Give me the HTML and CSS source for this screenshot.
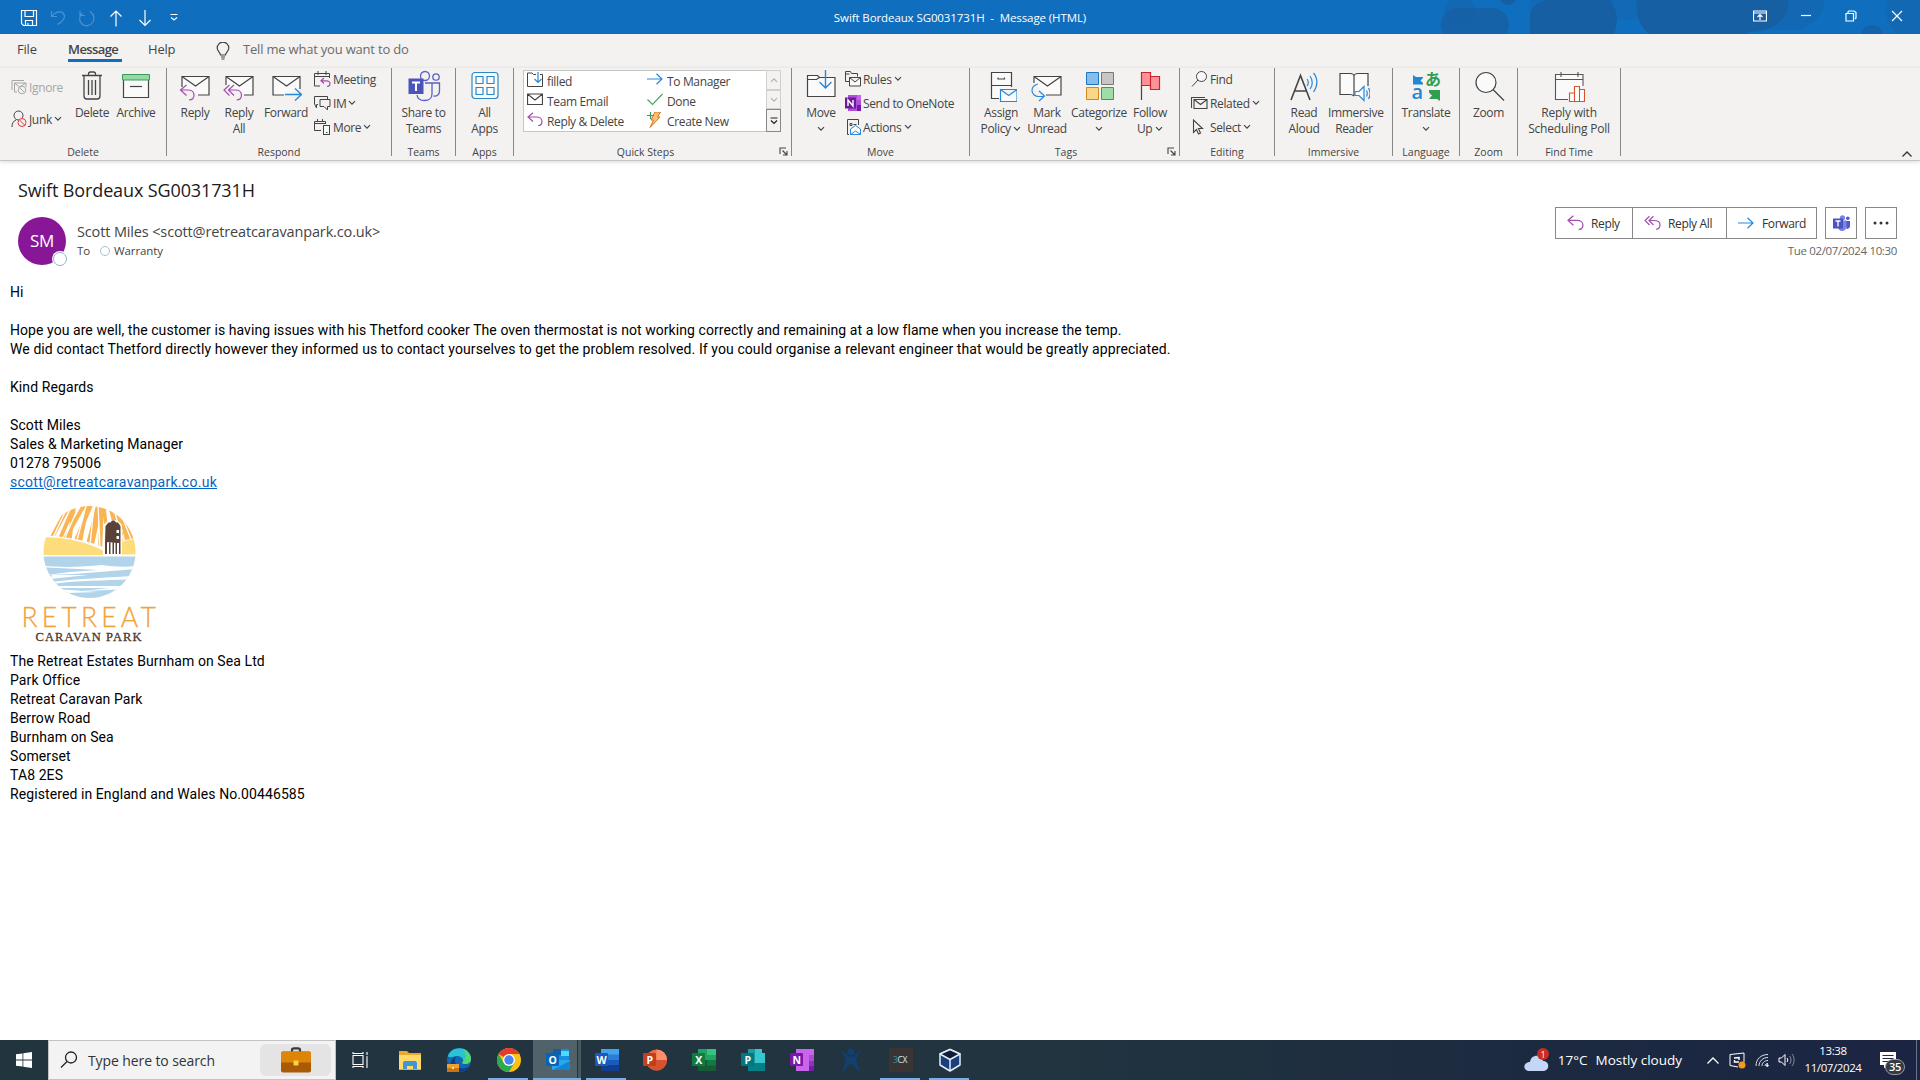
FILE: index.html
```html
<!DOCTYPE html>
<html lang="en">
<head>
  <meta charset="UTF-8">
  <title>Swift Bordeaux SG0031731H - Message (HTML)</title>
  <link rel="stylesheet" href="styles.css">
</head>
<body>
  <svg class="defs">
    <symbol id="chev" viewBox="0 0 8 6"><path d="M1 1.2l3 3 3-3" fill="none" stroke="currentColor" stroke-width="1.2"/></symbol>
    <symbol id="launch" viewBox="0 0 9 9"><path d="M1 7V1h6M3.5 3.5l4 4M8 4v4H4" fill="none" stroke="#444" stroke-width="1.1"/></symbol>
    <symbol id="arrow-back" viewBox="0 0 16 14"><path d="M6 .7L1 5l5 4.500M1 5h8.500c3 0 5.500 1.800 5.500 4.500S13 14 11 13.500" fill="none" stroke="#a34fae" stroke-width="1.200"/></symbol>
    <symbol id="arrow-back2" viewBox="0 0 17 14"><path d="M5.500 .7L1 5l4.500 4.500M9.500 .7L5 5l4.500 4.500M5 5h5c3.500 0 6 1.800 6 4.500S14 14 12 13.500" fill="none" stroke="#a34fae" stroke-width="1.200"/></symbol>
    <symbol id="arrow-fwd" viewBox="0 0 16 12"><path d="M0 6h15M9.500 .8L15 6l-5.500 5.200" fill="none" stroke="#2b88d8" stroke-width="1.200"/></symbol>
  </svg>

  <div class="window">
    <header class="titlebar">
      <svg class="clouds" width="500" height="34" viewBox="0 0 500 34">
        <g fill="#165fa3">
          <rect x="21" y="8" width="68" height="34" rx="17" opacity=".8"/>
          <circle cx="40" cy="10" r="15" opacity=".4"/>
          <path d="M110 34V14C112 2 130-4 150-4h36c10 8 14 22 8 38z"/>
          <path d="M217-2h152c0 20-14 34-40 34l-4 4h-94c-12-10-16-22-14-38z"/>
          <path d="M110 0h110v20H110z" opacity=".25"/>
          <circle cx="452" cy="36" r="11" opacity=".8"/>
          <circle cx="88" cy="-4" r="9"/>
          <path d="M468 0h32v34h-24c-10-12-12-22-8-34z" opacity=".4"/>
          <path d="M364 0h40c0 14-8 22-24 30h-36z" opacity=".4"/>
        </g>
      </svg>
      <div class="quick-access">
        <svg width="18" height="18" viewBox="0 0 18 18"><path d="M1.500 1.500h15v15h-13l-2-2zM5 1.500v6h8.500v-6M5.500 16.500v-5h7v5M8 14v2.500" class="line"/></svg>
        <svg width="18" height="18" viewBox="0 0 18 18" class="dim"><path d="M2.500 2v5.500H8M2.500 7.500C6 3 11 1.500 14 4c3 3 1.500 7-5.500 11.500" class="line"/></svg>
        <svg width="18" height="18" viewBox="0 0 18 18" class="dim"><path d="M2 2v4.500h5M4.500 4C1 7 .5 12 4 15s8 2 10.500-1.500 2-8-2.500-11" class="line"/></svg>
        <svg width="18" height="18" viewBox="0 0 18 18"><path d="M9 17.500V2M3.500 7.500L9 2l5.500 5.500" class="line"/></svg>
        <svg width="18" height="18" viewBox="0 0 18 18"><path d="M9 1v15.500M3.500 11L9 16.500l5.500-5.500" class="line"/></svg>
        <svg width="18" height="18" viewBox="0 0 18 18"><path d="M5.500 5.500h7M6 8.500l3 2.500 3-2.500" class="line"/></svg>
      </div>
      <div class="title">Swift Bordeaux SG0031731H &nbsp;-&nbsp; Message (HTML)</div>
      <div class="window-buttons">
        <svg width="14" height="12" viewBox="0 0 14 12"><path d="M.5 1h13v10H.5zM.5 3h13M7 10V4.500M4.500 7L7 4.500 9.500 7" class="line"/></svg>
        <svg width="10" height="12" viewBox="0 0 10 12"><path d="M0 5.500h10" class="line"/></svg>
        <svg width="12" height="12" viewBox="0 0 12 12"><path d="M1 3.500h7.500V11H1zM3 3.500V1.800L4 1h5l2 1.500V8l-1 1" class="line"/></svg>
        <svg width="12" height="12" viewBox="0 0 12 12"><path d="M1 1l10 10M11 1L1 11" class="line"/></svg>
      </div>
    </header>

    <nav class="tabs">
      <span class="tab tab-file">File</span>
      <span class="tab active">Message</span>
      <span class="tab tab-help">Help</span>
      <svg width="14" height="18" viewBox="0 0 14 18"><path d="M4.500 13c0-2.500-3.300-3.500-3.300-7a5.500 5.500 0 0111.600 0c0 3.500-3.300 4.500-3.300 7zM5 15h4M5.500 17h3" fill="none" stroke="#444" stroke-width="1.200"/></svg>
      <span class="tell-me">Tell me what you want to do</span>
    </nav>

    <div class="ribbon">
      <section class="group g-delete">
        <div class="group-body">
          <div class="small-col two">
            <div class="small disabled">
              <svg width="16" height="16" viewBox="0 0 16 16" fill="none" stroke="#a6a6a6"><path d="M1 11V1.500h12M6 13H3.500V4H15v4M3.500 4l5 4 6.500-4"/><circle cx="11" cy="11" r="3.800"/><path d="M8.500 8.500l5 5"/></svg>
              Ignore</div>
            <div class="small">
              <svg width="16" height="18" viewBox="0 0 16 18" fill="none" stroke="#444"><circle cx="7.500" cy="5.500" r="4.500"/><path d="M1 17c0-4 1.500-6 4-7"/><circle cx="11" cy="12.500" r="4" stroke="#e03a3e" fill="#f3f2f1"/><path d="M8.300 9.800l5.500 5.500" stroke="#e03a3e"/></svg>
              Junk <svg class="chev"><use href="#chev"/></svg></div>
          </div>
          <div class="big"><svg width="32" height="32" viewBox="0 0 32 32" fill="none" stroke="#444"><path d="M6 5.500h20M8 5.500V26c0 2 1 3 3 3h10c2 0 3-1 3-3V5.500M12.500 5V4c0-1.200.6-2 2-2h3c1.400 0 2 .8 2 2v1M12.500 10v15M16 10v15M19.500 10v15" stroke-width="1.300"/></svg>Delete</div>
          <div class="big"><svg width="32" height="32" viewBox="0 0 32 32"><path d="M3.500 9v18.500h25V9" fill="#fafafa" stroke="#444" stroke-width="1.200"/><path d="M2.500 4.500h27V10h-27z" fill="#92dba5" stroke="#3a9a57"/><path d="M10 16.500h12" stroke="#444" stroke-width="1.200"/></svg>Archive</div>
        </div>
        <div class="group-label">Delete</div>
      </section>

      <section class="group g-respond">
        <div class="group-body">
          <div class="big"><svg width="32" height="32" viewBox="0 0 32 32" fill="none" stroke="#444" stroke-width="1.200"><path d="M3 17V6.500h27V25H19" fill="#fafafa"/><path d="M3 6.500L16.500 16 30 6.500"/><path d="M7.500 15L1.500 20l6 5.500M2 20h6.500c4 0 6.500 1.500 6.500 5 0 3-2 5-5 5" stroke="#a34fae"/></svg>Reply</div>
          <div class="big"><svg width="32" height="32" viewBox="0 0 32 32" fill="none" stroke="#444" stroke-width="1.200"><path d="M3 15V6.500h27V25H21" fill="#fafafa"/><path d="M3 6.500L16.500 16 30 6.500"/><path d="M6.500 15L1 20l5.500 5.500M11 15l-5.500 5 5.500 5.500M5.500 20H12c4 0 6.500 1.500 6.500 5 0 3-2 5-5 5" stroke="#a34fae"/></svg>Reply<br>All</div>
          <div class="big"><svg width="32" height="32" viewBox="0 0 32 32" fill="none" stroke="#444" stroke-width="1.200"><path d="M14 25H3V6.500h27V19" fill="#fafafa"/><path d="M3 6.500L16.500 16 30 6.500"/><path d="M15 24.500h17M25 18.500l6.500 6-6.500 6" stroke="#2b88d8" stroke-width="1.400"/></svg>Forward</div>
          <div class="small-col">
            <div class="small"><svg width="17" height="16" viewBox="0 0 17 16" fill="none" stroke="#444"><path d="M6 15H.5V2.500h15V7M.5 5.500h15M4 0v4M12 0v4"/><path d="M10 7l-3 2.800 3 2.700M7 9.800h5c2 0 4 .8 4 3 0 1.500-1 2.700-3 2.700" stroke="#a34fae" stroke-width="1.200"/></svg>Meeting</div>
            <div class="small"><svg width="17" height="16" viewBox="0 0 17 16" fill="none" stroke="#444"><path d="M4 9.500H2.500V13L.5 9V1.500h13V4"/><path d="M6 4.500h10v7h-2.500V15L10 11.500H6z"/></svg>IM <svg class="chev"><use href="#chev"/></svg></div>
            <div class="small"><svg width="17" height="16" viewBox="0 0 17 16" fill="none" stroke="#444"><path d="M7 11.500H.5V2.500h11V5M.5 4.500h11M3.500 0v3M8.500 0v3"/><rect x="9.500" y="6.500" width="6" height="9" fill="#fafafa"/><path d="M12 13.500h1.500"/></svg>More <svg class="chev"><use href="#chev"/></svg></div>
          </div>
        </div>
        <div class="group-label">Respond</div>
      </section>

      <section class="group g-teams">
        <div class="group-body">
          <div class="big"><svg width="34" height="32" viewBox="0 0 34 32" fill="none" stroke="#5b5fc7" stroke-width="1.300"><circle cx="18" cy="6" r="4.500"/><circle cx="29" cy="7" r="3.200"/><path d="M18 13h7v11c0 4-3 6.500-7.500 6.500-4 0-7-2-7.500-5.500M25 13h7.500v8c0 3.500-2.500 5.500-6 5"/><path d="M1.500 8.500h15V24h-15z" fill="#4b53bc" stroke="none"/><path d="M5 12.500h8M9 12.500v8.500" stroke="#fff" stroke-width="2"/></svg>Share to<br>Teams</div>
        </div>
        <div class="group-label">Teams</div>
      </section>

      <section class="group g-apps">
        <div class="group-body">
          <div class="big"><svg width="32" height="32" viewBox="0 0 32 32" fill="#fafafa" stroke="#2b88c8" stroke-width="1.200"><rect x="3" y="2.500" width="26" height="26" rx="3"/><path d="M7 6.500h7v7H7zM18 6.500h7v7h-7zM7 17.500h7v7H7zM18 17.500h7v7h-7z"/></svg>All<br>Apps</div>
        </div>
        <div class="group-label">Apps</div>
      </section>

      <section class="group g-steps">
        <div class="group-body">
          <div class="gallery">
            <div class="gallery-items">
              <div><svg width="16" height="16" viewBox="0 0 16 16" fill="none" stroke="#444"><path d="M9 2.500H6.500L5 1H.5v13.500h15v-12H13"/><path d="M11 0v10M7.500 7L11 10.500 14.500 7" stroke="#2b88d8" stroke-width="1.200"/></svg>filled</div>
              <div><svg width="16" height="16" viewBox="0 0 16 16"><use href="#arrow-fwd" y="1" width="16" height="12"/></svg>To Manager</div>
              <div><svg width="16" height="16" viewBox="0 0 16 16" fill="none" stroke="#444" stroke-width="1.200"><path d="M.5 2h15v10.500H.5zM.5 2L8 8l7.500-6"/></svg>Team Email</div>
              <div><svg width="16" height="16" viewBox="0 0 16 16" fill="none" stroke="#4aa564" stroke-width="1.200"><path d="M.5 7.500l5 5L15.500 2"/></svg>Done</div>
              <div><svg width="16" height="16" viewBox="0 0 16 16"><use href="#arrow-back" width="16" height="14"/></svg>Reply &amp; Delete</div>
              <div><svg width="16" height="16" viewBox="0 0 16 16"><path d="M8 0h5.500L10.500 5H13L3 15.500 6.500 8H4z" fill="#f8c27a" stroke="#d9731a"/><path d="M0 3.500h7M3.500 0v7" stroke="#3a9a57" stroke-width="1.200"/></svg>Create New</div>
            </div>
            <div class="gallery-scroll">
              <div><svg class="chev up"><use href="#chev"/></svg></div>
              <div><svg class="chev"><use href="#chev"/></svg></div>
              <div class="more"><svg width="8" height="8" viewBox="0 0 8 8"><path d="M.5 1h7M1 3.500l3 3 3-3" fill="none" stroke="#222" stroke-width="1.200"/></svg></div>
            </div>
          </div>
        </div>
        <div class="group-label">Quick Steps</div>
        <svg class="launcher"><use href="#launch"/></svg>
      </section>

      <section class="group g-move">
        <div class="group-body">
          <div class="big"><svg width="32" height="32" viewBox="0 0 32 32" fill="none" stroke="#444" stroke-width="1.200"><path d="M2.500 26.500V5.500h10l2 2H30v19z" fill="#fafafa"/><path d="M2.500 9.500h9l3-2"/><path d="M20.500 0v17.500M14.500 12l6 6 6-6" stroke="#2b88d8" stroke-width="1.400"/></svg>Move<br><svg class="chev"><use href="#chev"/></svg></div>
          <div class="small-col">
            <div class="small"><svg width="16" height="16" viewBox="0 0 16 16" fill="none" stroke="#444"><path d="M4 10.500H.5V.5h5l1 2h6v3M.5 3h4"/><path d="M4.500 6.500h11v8.500h-11zM4.500 6.500L10 11l5.500-4.500" fill="#fafafa"/></svg>Rules <svg class="chev"><use href="#chev"/></svg></div>
            <div class="small"><svg width="16" height="16" viewBox="0 0 16 16"><path d="M3 0h13v16H3z" fill="#b04fd8"/><path d="M12 0h4v5h-4z" fill="#ca64ea"/><path d="M12 10h4v6h-4z" fill="#7719aa"/><path d="M0 2.500h11v11H0z" fill="#6a1b9a"/><path d="M3 11V5l5 6V5" stroke="#fff" stroke-width="1.400" fill="none"/></svg>Send to OneNote</div>
            <div class="small"><svg width="16" height="16" viewBox="0 0 16 16" fill="none" stroke="#444"><path d="M4 15.500H2.500V.5h11V6M5 4.500h2v2H5zM8.500 5.500h3"/><path d="M5.500 10L10.500 6.500 15.500 10v5.500h-10zM5.500 15.500L10.500 12l5 3.500" stroke="#2b88d8" fill="#fafafa"/></svg>Actions <svg class="chev"><use href="#chev"/></svg></div>
          </div>
        </div>
        <div class="group-label">Move</div>
      </section>

      <section class="group g-tags">
        <div class="group-body">
          <div class="big"><svg width="32" height="32" viewBox="0 0 32 32" fill="#fafafa" stroke="#444" stroke-width="1.200"><path d="M14 28.500H6.500v-26h20V17M6.500 15.500h20"/><path d="M13 7.500V9h6.500V7.500"/><path d="M15.500 19.500H32v12H15.500zM15.500 19.500l8.200 6 8.300-6" stroke="#2b88d8"/></svg>Assign<br>Policy <svg class="chev"><use href="#chev"/></svg></div>
          <div class="big"><svg width="32" height="32" viewBox="0 0 32 32" fill="none" stroke="#444" stroke-width="1.200"><path d="M3 13V6.500h27V25H15" fill="#fafafa"/><path d="M3 6.500L16.500 16 30 6.500"/><path d="M7 14c-4 1-6 4-6 6.500 0 3.500 3 6 6.500 6H13M8 21l5.500 5-5.500 5" stroke="#2b88d8"/></svg>Mark<br>Unread</div>
          <div class="big"><svg width="32" height="32" viewBox="0 0 32 32"><path d="M3.500 2.500h12v12h-12z" fill="#83beec" stroke="#1e75bd"/><path d="M18.500 2.500h12v12h-12z" fill="#c8c6c4" stroke="#797775"/><path d="M3.500 17.500h12v12h-12z" fill="#fad788" stroke="#cf8a1e"/><path d="M18.500 17.500h12v12h-12z" fill="#a0dca8" stroke="#3a9a57"/></svg>Categorize<br><svg class="chev"><use href="#chev"/></svg></div>
          <div class="big"><svg width="32" height="32" viewBox="0 0 32 32"><path d="M7.500 15v15" stroke="#444" stroke-width="1.200"/><path d="M7.500 2.500h9v4h9v13h-9v-4h-9zM16.500 6.500v9" fill="#ff9199" stroke="#c9252d" stroke-width="1.200"/></svg>Follow<br>Up <svg class="chev"><use href="#chev"/></svg></div>
        </div>
        <div class="group-label">Tags</div>
        <svg class="launcher"><use href="#launch"/></svg>
      </section>

      <section class="group g-editing">
        <div class="group-body">
          <div class="small-col">
            <div class="small"><svg width="17" height="16" viewBox="0 0 17 16" fill="#fafafa" stroke="#444"><circle cx="10.500" cy="5.500" r="5"/><path d="M7 9L1 15.500"/></svg>Find</div>
            <div class="small"><svg width="17" height="16" viewBox="0 0 17 16" fill="none" stroke="#444" stroke-width="1.100"><path d="M.5 13V2.500h13.500"/><path d="M3 4.500h13v9H3zM3 4.500l6.500 5 6.500-5"/></svg>Related <svg class="chev"><use href="#chev"/></svg></div>
            <div class="small"><svg width="17" height="16" viewBox="0 0 17 16" fill="none" stroke="#444" stroke-width="1.100"><path d="M2.500 1v12.500l3-3 2 4.500 2-1-2-4.500h4z"/></svg>Select <svg class="chev"><use href="#chev"/></svg></div>
          </div>
        </div>
        <div class="group-label">Editing</div>
      </section>

      <section class="group g-immersive">
        <div class="group-body">
          <div class="big"><svg width="32" height="32" viewBox="0 0 32 32" fill="none" stroke="#444" stroke-width="1.600"><path d="M3 30L12.500 5.500 22 30M6.500 21h12"/><path d="M19 9c1.500 2 1.500 5 0 7M22 6c3 4 3 9.500 0 13M25.500 3c4.500 5.500 4.500 13 0 19" stroke="#2b88d8" stroke-width="1.200"/></svg>Read<br>Aloud</div>
          <div class="big"><svg width="32" height="32" viewBox="0 0 32 32" fill="#fafafa" stroke="#444" stroke-width="1.200"><path d="M16 26c-1-1-2-1.500-4-1.500H2V3.500h10c2 0 4 1 4 3 0-2 2-3 4-3h10V16M16 6.500V26"/><path d="M17 21.500h4l5-5v14l-5-5h-4z" stroke="#2b88d8"/><path d="M28.500 20.500c1 2 1 4 0 6M30.500 18c2 3.500 2 7.500 0 11" stroke="#2b88d8" fill="none"/></svg>Immersive<br>Reader</div>
        </div>
        <div class="group-label">Immersive</div>
      </section>

      <section class="group g-language">
        <div class="group-body">
          <div class="big"><svg width="32" height="32" viewBox="0 0 32 32"><path d="M3 5l3 2h7v1l-2.500 2.500L13 13v1.500H3z" fill="#1e88d2"/><path d="M19 20h11v11l-3-2h-8l3-3.500-3-3z" fill="#2e9e4f"/><text x="1.500" y="29" class="glyph-a">a</text><text x="15" y="14.500" class="glyph-jp">あ</text></svg>Translate<br><svg class="chev"><use href="#chev"/></svg></div>
        </div>
        <div class="group-label">Language</div>
      </section>

      <section class="group g-zoom">
        <div class="group-body">
          <div class="big"><svg width="32" height="32" viewBox="0 0 32 32" fill="#fafafa" stroke="#444" stroke-width="1.200"><circle cx="13" cy="12.500" r="10"/><path d="M20 19.500l11 11"/></svg>Zoom</div>
        </div>
        <div class="group-label">Zoom</div>
      </section>

      <section class="group g-find">
        <div class="group-body">
          <div class="big"><svg width="32" height="32" viewBox="0 0 32 32" fill="#fafafa" stroke="#555" stroke-width="1.100"><path d="M15 29.500H2.500v-25H30V16M2.500 9.500H30M8 2v5M25 2v5"/><path d="M16.500 23h5v8.500h-5zM21.500 16.500h5v15h-5zM26.500 19.500h5v12h-5z" stroke="#d8512a" fill="#fff"/></svg>Reply with<br>Scheduling Poll</div>
        </div>
        <div class="group-label">Find Time</div>
      </section>

      <svg class="collapse" width="12" height="8" viewBox="0 0 12 8"><path d="M1.500 6.500L6 2l4.500 4.500" fill="none" stroke="#333" stroke-width="1.300"/></svg>
    </div>

    <main class="message">
      <h1>Swift Bordeaux SG0031731H</h1>
      <div class="message-head">
        <div class="avatar">SM<span class="presence"></span></div>
        <div class="sender">
          <div class="from">Scott Miles &lt;scott@retreatcaravanpark.co.uk&gt;</div>
          <div class="to"><span>To</span><i class="dot"></i><b>Warranty</b></div>
        </div>
        <div class="head-right">
          <div class="actions">
            <div class="action-group">
              <div class="action a-reply"><svg width="17" height="16"><use href="#arrow-back" width="17" height="15"/></svg>Reply</div>
              <div class="action a-all"><svg width="17" height="16"><use href="#arrow-back2" width="17" height="15"/></svg>Reply All</div>
              <div class="action a-forward"><svg width="17" height="14"><use href="#arrow-fwd" width="16" height="14"/></svg>Forward</div>
            </div>
            <div class="action square"><svg width="17" height="16" viewBox="0 0 17 16"><circle cx="9.500" cy="2.800" r="2.600" fill="#7b83eb"/><circle cx="14.800" cy="3.200" r="1.800" fill="#5059c9"/><path d="M12 6h5v5c0 2-1.500 3-3.500 3z" fill="#5059c9"/><path d="M5 5.500h8.500V11c0 3-2 5-4.500 5s-4-2-4-4z" fill="#7b83eb"/><path d="M0 3.500h10v10H0z" fill="#4b53bc"/><path d="M2.500 6h5M5 6v5.500" stroke="#fff" stroke-width="1.300"/></svg></div>
            <div class="action square"><svg width="16" height="4" viewBox="0 0 16 4" fill="#333"><circle cx="2" cy="2" r="1.500"/><circle cx="8" cy="2" r="1.500"/><circle cx="14" cy="2" r="1.500"/></svg></div>
          </div>
          <div class="date">Tue 02/07/2024 10:30</div>
        </div>
      </div>

      <article class="mail-body">
        <p>Hi</p>
        <p><span class="tight">Hope you are well, the customer is having issues with his Thetford cooker The oven thermostat is not working correctly and remaining at a low flame when you increase the temp.</span><br>
        We did contact Thetford directly however they informed us to contact yourselves to get the problem resolved. If you could organise a relevant engineer that would be greatly appreciated.</p>
        <p>Kind Regards</p>
        <p class="signature">Scott Miles<br>
        Sales &amp; Marketing Manager<br>
        01278 795006<br>
        <a>scott@retreatcaravanpark.co.uk</a></p>
        <svg class="logo" width="160" height="160" viewBox="0 0 160 160">
          <clipPath id="disc"><circle cx="79.500" cy="60" r="46"/></clipPath>
          <clipPath id="sky"><path d="M30 10h100v36c-6 0-12 1-18 3L98 57C78 48 56 44 30 43z"/></clipPath>
          <g clip-path="url(#disc)">
            <g clip-path="url(#sky)">
              <path d="M34 60L60 12M46 56L66 10M50 56L78 6M64 14L58 60M62 58L84 6M78 10L68 60M76 60L90 6M92 6L80 62M90 62L92 6M98 60L94 6M112 60L98 6M108 60L103 6M114 60L104 6M120 60L107 8M112 16L124 60M128 60L116 20" stroke="#f9b454" stroke-width="4" fill="none"/>
              <path d="M38 56L58 14M54 48L68 16M66 52L76 14M80 54L84 12M90 56L88 12M98 30L96 12M114 50L102 12M122 50L108 14" stroke="#fff" stroke-width="1.300" fill="none"/>
            </g>
            <path d="M30 45c28 0 48 6 64 14v4H30z" fill="#fddc7c"/>
            <path d="M112 50c5-2 10-3 16-3v15.500h-16z" fill="#fddc7c"/>
            <path d="M30 64.500h100v44H30z" fill="#b1d4ea"/>
            <path d="M30 73c18 3 42 2 62 0 12 2 24 2 34 1v3l-62 5-28 1 24-3 28-2-58-3zM42 83l36 0-38 4zM42 92c28-4 50-3 80-5v-3c-30 2-60 3-80 6zM40 96l60 0-28 3 50-2v-3l-80 0zM46 97l42 3-30 1zM95 103l25-3v8H84z" fill="#fff"/>
          </g>
          <path d="M93 34c4-7 15-9 19 0v29H93z" fill="#fff"/>
          <path d="M95.500 34l3-3.500h2l1.500-2h2.500l1.500 2h2l2.500 3.500v17l-15.500-1zM95 50h2v12h-2zM99 50h1.500v12H99zM102.500 50h1.500v12h-1.500zM105.500 50h1.500v12h-1.500zM109 50h1.500v12H109z" fill="#5b4238"/>
          <path d="M106.500 38h2.500v3h-2.500zM106.500 44h2.500v3h-2.500z" fill="#fff"/>
          <text x="11.500" y="134.500" class="logo-name">RETREAT</text>
          <text x="25.500" y="149" class="logo-sub">CARAVAN PARK</text>
        </svg>
        <p class="address">The Retreat Estates Burnham on Sea Ltd<br>
        Park Office<br>
        Retreat Caravan Park<br>
        Berrow Road<br>
        Burnham on Sea<br>
        Somerset<br>
        TA8 2ES<br>
        Registered in England and Wales No.00446585</p>
      </article>
    </main>

    <footer class="taskbar">
      <div class="start"><svg width="16" height="16" viewBox="0 0 16 16" fill="#fff"><path d="M0 2.300l6.500-.9v6.100H0zM7.300 1.300L16 0v7.500H7.300zM0 8.400h6.500v6.200L0 13.700zM7.300 8.400H16V16l-8.700-1.200z"/></svg></div>
      <div class="search">
        <svg width="18" height="18" viewBox="0 0 18 18" fill="none" stroke="#222" stroke-width="1.300"><circle cx="11" cy="6.500" r="5.500"/><path d="M7 10.500L1 16.500"/></svg>
        <span>Type here to search</span>
        <div class="search-art"><svg width="30" height="26" viewBox="0 0 30 26"><path d="M11 5V3c0-1 1-1.700 2-1.700h4c1 0 2 .7 2 1.700v2" fill="none" stroke="#3a3a3a" stroke-width="2.200"/><rect y="4.500" width="30" height="21" rx="2" fill="#a85a06"/><path d="M0 15.500V6.500c0-1 1-2 2-2h26c1 0 2 1 2 2v9z" fill="#dd8509"/><rect x="12.500" y="13.500" width="5" height="5" fill="#fdd23c"/></svg></div>
      </div>
      <div class="apps">
        <div class="app"><svg width="18" height="18" viewBox="0 0 18 18" fill="none" stroke="#fff" stroke-width="1.100"><path d="M1 4.500h10v9H1zM1 1v1.500h10V1M1 17v-1.500h10V17M15 1v3M15 7v10M14 6h2"/></svg></div>
        <div class="app"><svg width="24" height="24" viewBox="0 0 24 24"><path d="M1 3h8l2 2h12v17H1z" fill="#e8a92c"/><path d="M1 7h22v14H1z" fill="#ffd869"/><path d="M5 21v-6c0-1 .7-2 2-2h10c1.300 0 2 1 2 2v6h-4v-3H9v3z" fill="#3f95d8"/></svg></div>
        <div class="app"><svg width="24" height="24" viewBox="0 0 24 24"><circle cx="12" cy="12" r="12" fill="#1267b4"/><path d="M1 8C4-2 22-3 24 10c.5 6-6 7-9 5 3-4-1-7-5-7-4 0-7 3-9 0z" fill="#2bc3d2"/><path d="M16 1c5 2 8 6 8 10 0 5-6 6-9 4 3-2 6-8 1-14z" fill="#5bd66b"/><path d="M10 8c-4 3-2 10 3 12 4 1 7 0 9-2-4 7-13 7-17 4-4-5 0-12 5-14z" fill="#0c3f86"/><path d="M0 16h12v8H0z" fill="#c87412"/><path d="M0 16h12v4H0z" fill="#f0a030"/><path d="M5 19h2v2H5z" fill="#ffe07a"/></svg></div>
        <div class="app open"><svg width="24" height="24" viewBox="0 0 24 24"><circle cx="12" cy="12" r="12" fill="#fbc116"/><path d="M12 12L1.600 6A12 12 0 0122.400 6H12z" fill="#e33b2e"/><path d="M1.600 6A12 12 0 0012 24l5.200-9H6.800z" fill="#2da94f"/><circle cx="12" cy="12" r="6" fill="#fff"/><circle cx="12" cy="12" r="4.700" fill="#4285f4"/></svg></div>
        <div class="app open current"><svg width="24" height="24" viewBox="0 0 24 24"><path d="M7 1h16v13H7z" fill="#1490df"/><path d="M15 3h8v5h-8z" fill="#50d9ff"/><path d="M7 1h8v6H7z" fill="#0f5fa8"/><path d="M6 12l18 0v10H6z" fill="#28a8ea"/><path d="M6 22l18-9v9z" fill="#1384d8"/><rect y="5" width="13" height="13" rx="1" fill="#0364b8"/><text x="6.500" y="15.500" class="app-letter">O</text></svg></div>
        <div class="app open"><svg width="24" height="24" viewBox="0 0 24 24"><path d="M6 1h18v6H6z" fill="#41a5ee"/><path d="M6 6.500h18V12H6z" fill="#2b7cd3"/><path d="M6 12h18v5H6z" fill="#185abd"/><path d="M6 17h18v6H6z" fill="#103f91"/><rect y="5" width="13" height="13" rx="1" fill="#185abd"/><text x="6.500" y="15.500" class="app-letter">W</text></svg></div>
        <div class="app"><svg width="24" height="24" viewBox="0 0 24 24"><circle cx="13.500" cy="12" r="10.500" fill="#ed6c47"/><path d="M13.500 1.500A10.500 10.500 0 0124 12H13.500z" fill="#ff8f6b"/><path d="M3 12h21a10.500 10.500 0 01-21 0z" fill="#d35230"/><rect y="5" width="13" height="13" rx="1" fill="#c43e1c"/><text x="6.500" y="15.500" class="app-letter">P</text></svg></div>
        <div class="app"><svg width="24" height="24" viewBox="0 0 24 24"><path d="M6 1h18v22H6z" fill="#21a366"/><path d="M15 1h9v6h-9z" fill="#33c481"/><path d="M6 12h18v11H6z" fill="#185c37"/><path d="M15 12h9v5.500h-9z" fill="#107c41"/><rect y="5" width="13" height="13" rx="1" fill="#107c41"/><text x="6.500" y="15.500" class="app-letter">X</text></svg></div>
        <div class="app"><svg width="24" height="24" viewBox="0 0 24 24"><path d="M7 1h14v22H7z" fill="#1a9ba1"/><path d="M14 1h7v8h-7z" fill="#37c6d0"/><path d="M14 5h10v16H14z" fill="#37c6d0"/><path d="M7 15h17v8H7z" fill="#058089"/><rect y="5" width="13" height="13" rx="1" fill="#03787c"/><text x="6.500" y="15.500" class="app-letter">P</text></svg></div>
        <div class="app"><svg width="24" height="24" viewBox="0 0 24 24"><path d="M6 1h18v22H6z" fill="#ca64ea"/><path d="M19 7h5v6h-5z" fill="#ae4bd5"/><path d="M19 13h5v5h-5z" fill="#9332bf"/><path d="M19 18h5v5h-5z" fill="#7719aa"/><rect y="5" width="13" height="13" rx="1" fill="#7719aa"/><text x="6.500" y="15.500" class="app-letter">N</text></svg></div>
        <div class="app"><svg width="24" height="24" viewBox="0 0 24 24" fill="#123f70"><circle cx="12" cy="4" r="3.500"/><path d="M2 2l9 7h2l9-7-5 10 4 11h-2l-6-7h-2l-6 7H3l4-11z"/></svg></div>
        <div class="app open"><svg width="24" height="24" viewBox="0 0 24 24"><path d="M0 0h24v24H0z" fill="#3a3534"/><text x="4" y="15" class="cx"><tspan fill="#2b8fb0">3</tspan>CX</text></svg></div>
        <div class="app open"><svg width="24" height="24" viewBox="0 0 24 24" stroke="#e6edf5" stroke-width="1.500" stroke-linejoin="round"><path d="M12 1.500L22 6v11l-10 6-10-6V6z" fill="#1b3f7c"/><path d="M12 1.500L22 6l-10 5.500L2 6z" fill="#0f1c3b"/><path d="M12 11.500V23"/></svg></div>
      </div>
      <div class="tray">
        <div class="weather">
          <svg width="26" height="24" viewBox="0 0 26 24"><path d="M6 23c-8 0-7-9 0-9 1-8 12-8 13-1 7 0 7 10 0 10z" fill="#c4d7f8"/><circle cx="19" cy="6" r="6" fill="#cc2b1e"/><text x="19" y="9.500" class="badge">1</text></svg>
          <span>17°C</span><span>Mostly cloudy</span>
        </div>
        <div class="tray-icons">
          <svg width="14" height="9" viewBox="0 0 14 9"><path d="M1.500 7.500L7 2l5.500 5.500" fill="none" stroke="#fff" stroke-width="1.300"/></svg>
          <svg width="17" height="17" viewBox="0 0 17 17" fill="none" stroke="#fff"><path d="M9 15L1 13.500v-11L15 1v9"/><path d="M5 6l5-.5V8M10 10H5.500V8" stroke-width="1.400"/><circle cx="13" cy="13" r="3.500" fill="#f7991c" stroke="none"/></svg>
          <svg width="14" height="14" viewBox="0 0 14 14" fill="none" stroke="#dfe3ea"><path d="M1 13C1 6 6 1.500 13 1.500M4 13c0-5 4-8.500 9-8.500M7 13c0-3 2.500-5.500 6-5.500M10 13c0-1.500 1-2.500 3-2.500"/><circle cx="12.300" cy="12.500" r="1" fill="#fff"/></svg>
          <svg width="17" height="14" viewBox="0 0 17 14" fill="none" stroke="#fff"><path d="M1 5h2.500L7 1.500v11L3.500 9H1zM9 5c1 1.200 1 2.800 0 4"/><path d="M11.500 3c2 2.400 2 5.600 0 8M14 1c2.800 3.500 2.800 8.500 0 12" stroke="#8490a5"/></svg>
        </div>
        <div class="clock">13:38<br>11/07/2024</div>
        <div class="notify"><svg width="16" height="17" viewBox="0 0 16 17"><path d="M0 0h16v13H7l-3 3.500V13H0z" fill="#fff"/><path d="M2.500 3.500h11M2.500 6.500h11M2.500 9.500h7" stroke="#1c2844" stroke-width="1.200"/></svg><span class="count">35</span></div>
        <div class="peek"></div>
      </div>
    </footer>
  </div>
</body>
</html>
```
FILE: styles.css
```css
* {
  box-sizing: border-box;
}

body {
  margin: 0;
  font-family: "Open Sans", "Noto Sans", sans-serif;
  font-size: 12px;
  letter-spacing: -0.35px;
  color: #444444;
  background-color: #ffffff;
}

svg {
  flex: none;
}

.defs {
  display: none;
}

.window {
  display: flex;
  flex-direction: column;
  width: 1920px;
  height: 1080px;
  overflow: hidden;
}

/* title bar */
.titlebar {
  position: relative;
  display: grid;
  grid-template-columns: 700px 1fr 700px;
  align-items: center;
  height: 34px;
  background-color: #106ebe;
  color: #ffffff;
}

.clouds {
  position: absolute;
  top: 0;
  right: 0;
}

.line {
  fill: none;
  stroke: #ffffff;
  stroke-width: 1.2;
}

.dim {
  opacity: 0.25;
}

.quick-access {
  display: flex;
  gap: 11px;
  padding: 2px 0 0 20px;
}

.title {
  text-align: center;
  font-size: 11.5px;
  letter-spacing: -0.1px;
  white-space: nowrap;
  padding-top: 1px;
}

.window-buttons {
  position: relative;
  display: flex;
  justify-content: flex-end;
  align-items: center;
  gap: 34px;
  padding: 0 17px 2px 0;
}

/* tabs */
.tabs {
  display: flex;
  align-items: flex-start;
  height: 34px;
  background-color: #f3f2f1;
  font-size: 13px;
  letter-spacing: -0.2px;
  line-height: 20px;
  padding: 5px 0 0 17px;
}

.tabs svg {
  margin: 3px 13px 0 41px;
}

.tab {
  height: 23px;
}

.tab-file {
  width: 51px;
}

.tab.active {
  width: 54px;
  font-weight: 600;
  letter-spacing: -0.6px;
  border-bottom: 3px solid #106ebe;
}

.tab-help {
  margin-left: 26px;
  width: 27px;
}

.tell-me {
  color: #6b6b6b;
}

/* ribbon */
.ribbon {
  display: flex;
  flex: none;
  height: 93px;
  background-color: #f3f2f1;
  border-bottom: 1px solid #c8c6c4;
  box-shadow: 0 1px 4px rgba(0, 0, 0, 0.16);
}

.group {
  position: relative;
  display: flex;
  flex-direction: column;
  height: 88px;
  border-right: 1px solid #8a8886;
}

.group-body {
  display: grid;
  height: 74px;
}

.group-label {
  text-align: center;
  font-size: 10.5px;
  letter-spacing: 0;
  line-height: 20px;
  height: 14px;
}

.g-delete { width: 167px; }
.g-delete .group-body { grid-template-columns: 70px 44px 44px; }
.g-respond { width: 225px; }
.g-respond .group-body { grid-template-columns: 44px 44px 50px 76px; padding-left: 6px; }
.g-teams { width: 64px; }
.g-apps { width: 58px; }
.g-steps { width: 278px; }
.g-steps .group-body { padding: 2px 0 0 9px; }
.g-move { width: 178px; }
.g-move .group-body { grid-template-columns: 44px 126px; padding-left: 7px; }
.g-tags { width: 210px; }
.g-tags .group-body { grid-template-columns: 46px 46px 58px 44px; padding-left: 8px; }
.g-editing { width: 95px; }
.g-immersive { width: 118px; }
.g-immersive .group-body { grid-template-columns: 48px 52px; padding-left: 5px; }
.g-language { width: 67px; }
.g-zoom { width: 58px; }
.g-find { width: 103px; }
.g-steps .group-label { padding-right: 14px; }
.g-tags .group-label { padding-right: 17px; }

.big {
  display: block;
  justify-self: center;
  width: 100%;
  padding-top: 2px;
  text-align: center;
  line-height: 16px;
  white-space: nowrap;
}

.g-find .big {
  letter-spacing: -0.2px;
}

.big > svg:first-child {
  display: block;
  margin: 0 auto 3px;
}

.small-col {
  display: flex;
  flex-direction: column;
  gap: 8px;
  padding: 3px 0 0 3px;
}

.small-col.two {
  gap: 16px;
  padding: 11px 0 0 11px;
}

.g-move .small-col {
  padding-left: 2px;
}

.g-editing .small-col {
  padding-left: 11px;
}

.small {
  display: flex;
  align-items: center;
  gap: 2px;
  height: 16px;
  white-space: nowrap;
}

.disabled {
  color: #a6a6a6;
}

.chev {
  width: 8px;
  height: 6px;
  vertical-align: 1px;
}

.chev.up {
  transform: rotate(180deg);
}

.launcher {
  position: absolute;
  right: 3px;
  bottom: 0;
  width: 9px;
  height: 9px;
}

.gallery {
  display: flex;
  width: 258px;
  height: 62px;
  border: 1px solid #c8c6c4;
  background-color: #ffffff;
}

.gallery-items {
  display: grid;
  grid-template-columns: 120px 120px;
  grid-template-rows: 20px 20px 20px;
  flex: 1;
  padding-left: 3px;
}

.gallery-items div {
  display: flex;
  align-items: center;
  gap: 4px;
  padding-top: 1px;
  white-space: nowrap;
}

.gallery-items svg {
  margin-top: -4px;
}

.gallery-scroll {
  display: grid;
  grid-template-rows: 20px 19px 23px;
  width: 16px;
  margin: -1px;
  color: #b3b0ad;
}

.gallery-scroll div {
  display: flex;
  align-items: center;
  justify-content: center;
  border: 1px solid #d2d0ce;
  background-color: #f3f2f1;
}

.gallery-scroll .more {
  border-color: #8a8886;
}

.collapse {
  margin: 82px 7px 0 auto;
}

/* message header */
.message {
  flex: 1;
  padding-top: 17px;
}

h1 {
  margin: 0 0 16px 18px;
  font-size: 18px;
  font-weight: 400;
  letter-spacing: -0.12px;
  line-height: 24px;
  color: #1b1b1b;
}

.message-head {
  display: flex;
  height: 65px;
  padding: 0 23px 0 18px;
}

.avatar {
  position: relative;
  width: 48px;
  height: 48px;
  margin-top: -1px;
  border-radius: 50%;
  background-color: #881798;
  color: #ffffff;
  font-size: 17px;
  line-height: 48px;
  text-align: center;
}

.presence {
  position: absolute;
  right: -1px;
  bottom: -1px;
  width: 14px;
  height: 14px;
  border: 1px solid #8fb4c4;
  border-radius: 50%;
  background-color: #ffffff;
  box-shadow: 0 0 0 1px #ffffff;
}

.sender {
  margin: 4px 0 0 11px;
}

.from {
  font-size: 14.5px;
  letter-spacing: -0.14px;
  line-height: 20px;
}

.to {
  display: flex;
  align-items: center;
  font-size: 11.5px;
  letter-spacing: -0.1px;
  line-height: 18px;
}

.to b {
  font-weight: 400;
}

.dot {
  width: 10px;
  height: 10px;
  margin: 0 4px 0 10px;
  border: 1px solid #a3c3d3;
  border-radius: 50%;
}

.head-right {
  margin: -11px 0 0 auto;
}

.actions {
  display: flex;
  gap: 8px;
}

.action-group {
  display: flex;
  border: 1px solid #8a8886;
}

.action {
  display: flex;
  align-items: center;
  gap: 7px;
  height: 30px;
  padding-left: 11px;
  color: #333333;
}

.a-reply { width: 76px; }
.a-all { width: 94px; border-left: 1px solid #8a8886; }
.a-forward { width: 90px; border-left: 1px solid #8a8886; }

.square {
  width: 32px;
  height: 32px;
  padding: 0;
  justify-content: center;
  border: 1px solid #8a8886;
}

.date {
  margin-top: 3px;
  text-align: right;
  font-size: 11.5px;
  letter-spacing: -0.35px;
  line-height: 18px;
  color: #666666;
}

/* mail text */
.mail-body {
  padding-left: 10px;
  font-family: Roboto, sans-serif;
  font-size: 14px;
  letter-spacing: 0.09px;
  line-height: 19px;
  color: #000000;
}

.mail-body p {
  margin: 0 0 19px;
  white-space: nowrap;
}

.mail-body .signature {
  margin: 0;
}

.tight {
  letter-spacing: 0.065px;
}

.mail-body a {
  color: #0563c1;
  letter-spacing: 0.27px;
  text-decoration: underline;
}

.logo {
  display: block;
}

.logo-name {
  font-family: Lato, sans-serif;
  font-weight: 300;
  font-size: 26.5px;
  letter-spacing: 4.2px;
  fill: #f0a43c;
  stroke: #f0a43c;
  stroke-width: 0.3px;
}

.logo-sub {
  font-family: "Liberation Serif", serif;
  font-size: 12.5px;
  letter-spacing: 1.1px;
  fill: #4d352c;
  stroke: #4d352c;
  stroke-width: 0.3px;
}

.glyph-a {
  font: 600 20px "Open Sans", sans-serif;
  fill: #1e88d2;
}

.glyph-jp {
  font: 700 16px "Noto Sans CJK JP", sans-serif;
  fill: #2e9e4f;
}

/* taskbar */
.taskbar {
  display: flex;
  flex: none;
  height: 40px;
  background: linear-gradient(90deg, #22353f 0%, #21343f 55%, #1c2a40 80%, #1b2543 100%);
  color: #ffffff;
}

.start {
  display: flex;
  align-items: center;
  justify-content: center;
  width: 48px;
}

.search {
  display: flex;
  align-items: center;
  width: 288px;
  padding: 0 4px 0 11px;
  border: 1px solid #c3c3c3;
  background-color: #f3f3f3;
  color: #333333;
  font-size: 14px;
  letter-spacing: -0.1px;
}

.search span {
  margin-left: 10px;
  white-space: nowrap;
}

.search-art {
  display: flex;
  align-items: center;
  justify-content: center;
  width: 71px;
  height: 32px;
  margin-left: auto;
  border-radius: 6px;
  background-color: #e4e4e4;
}

.apps {
  display: flex;
}

.app {
  display: flex;
  align-items: center;
  justify-content: center;
  width: 49px;
  height: 40px;
}

.app + .app {
  padding-left: 1px;
}

.open {
  width: 40px;
  margin: 0 4px 0 5px;
  border-bottom: 2px solid #76b0e8;
  padding-top: 2px;
}

.current {
  width: 48px;
  margin: 0 0 0 1px;
  background: linear-gradient(90deg, #52626a 44px, #22353f 44px, #22353f 45px, #475860 45px);
}

.app-letter {
  font: 700 10.5px "Open Sans", sans-serif;
  text-anchor: middle;
  fill: #ffffff;
}

.cx {
  font: 8.5px "Open Sans", sans-serif;
  fill: #d8e6ea;
}

.tray {
  display: flex;
  align-items: center;
  margin-left: auto;
}

.weather {
  display: flex;
  align-items: center;
  font-size: 13.5px;
  letter-spacing: 0;
  white-space: nowrap;
}

.weather span {
  margin-left: 8px;
}

.badge {
  font: 9px "Open Sans", sans-serif;
  text-anchor: middle;
  fill: #ffffff;
}

.tray-icons {
  display: flex;
  align-items: center;
  gap: 9px;
  margin-left: 24px;
}

.clock {
  width: 60px;
  margin-left: 8px;
  text-align: center;
  font-size: 11.5px;
  letter-spacing: -0.4px;
  line-height: 17px;
  padding-bottom: 2px;
}

.notify {
  position: relative;
  width: 16px;
  height: 17px;
  margin: 0 20px 0 17px;
}

.count {
  position: absolute;
  left: 5px;
  top: 7px;
  width: 20px;
  height: 16px;
  border: 1px solid #9a9a9a;
  border-radius: 8px;
  background-color: #333a44;
  font-size: 11px;
  font-weight: 600;
  line-height: 14px;
  text-align: center;
}

.peek {
  width: 4px;
  height: 40px;
  border-left: 1px solid #6b7486;
}
```
